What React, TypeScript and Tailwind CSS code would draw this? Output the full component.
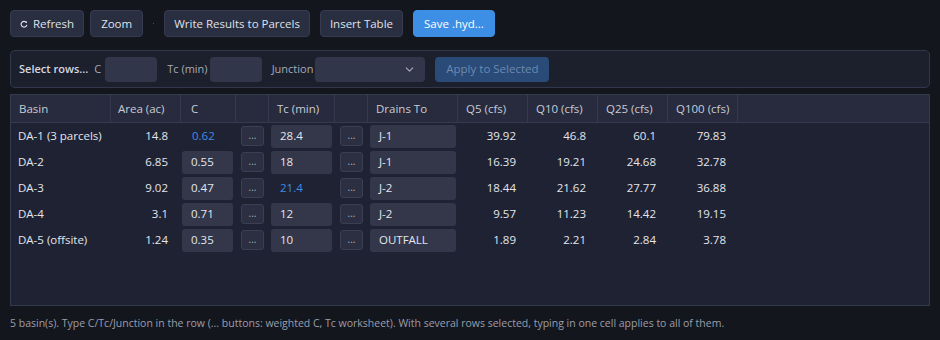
import { ChevronDown } from "lucide-react";

type Row = {
  name: string;
  area: string;
  c: string;
  cCalc?: boolean;
  tc: string;
  tcCalc?: boolean;
  to: string;
  q: string[];
};

const rows: Row[] = [
  { name: "DA-1 (3 parcels)", area: "14.8", c: "0.62", cCalc: true, tc: "28.4", to: "J-1", q: ["39.92", "46.8", "60.1", "79.83"] },
  { name: "DA-2", area: "6.85", c: "0.55", tc: "18", to: "J-1", q: ["16.39", "19.21", "24.68", "32.78"] },
  { name: "DA-3", area: "9.02", c: "0.47", tc: "21.4", tcCalc: true, to: "J-2", q: ["18.44", "21.62", "27.77", "36.88"] },
  { name: "DA-4", area: "3.1", c: "0.71", tc: "12", to: "J-2", q: ["9.57", "11.23", "14.42", "19.15"] },
  { name: "DA-5 (offsite)", area: "1.24", c: "0.35", tc: "10", to: "OUTFALL", q: ["1.89", "2.21", "2.84", "3.78"] },
];

const cols = "grid grid-cols-[100px_70px_55px_33px_66px_33px_90px_70px_70px_70px_70px_1fr]";

function Btn({ children, primary }: { children: React.ReactNode; primary?: boolean }) {
  return (
    <button
      className={
        primary
          ? "flex h-[27px] items-center rounded-[4px] border border-[#3d8fe6] bg-[#3d8fe6] px-[10px] text-white"
          : "flex h-[27px] items-center rounded-[4px] border border-[#363b51] bg-[#2a2e41] px-[9px] text-[#dfe2ea]"
      }
    >
      {children}
    </button>
  );
}

function Dots() {
  return (
    <button className="flex h-[20px] w-[23px] items-center justify-center rounded-[3px] border border-[#3a3f54] bg-[#2b2f41] pb-[3px] text-[10px] leading-none text-[#a9aebb]">
      ...
    </button>
  );
}

function Cell({ value, w }: { value: string; w: string }) {
  return (
    <div className={`flex h-[23px] items-center rounded-[3px] bg-[#333749] pl-[9px] text-[#e3e6ee] ${w}`}>{value}</div>
  );
}

export default function App() {
  return (
    <div
      className="h-[340px] w-[940px] overflow-hidden bg-[#14161e] px-[10px] pt-[10px] text-[11.5px] text-[#dfe2ea]"
      style={{ fontFamily: '"Open Sans", "Noto Sans", sans-serif' }}
    >
      <div className="flex items-center">
        <Btn>
          <svg width="8" height="8" viewBox="0 0 10 10" className="mr-[5px]">
            <path d="M8 3.2A3.6 3.6 0 1 0 8.6 6" fill="none" stroke="#dfe2ea" strokeWidth="1.4" />
            <path d="M6.3 2.6L8.8 1.5L8.6 4.2Z" fill="#dfe2ea" />
          </svg>
          Refresh
        </Btn>
        <div className="ml-[6px]">
          <div className="[&>button]:px-[10px]">
            <Btn>Zoom</Btn>
          </div>
        </div>
        <div className="ml-[10px] h-[1px] w-[1px] bg-[#4a4f63]" />
        <div className="ml-[10px]">
          <Btn>Write Results to Parcels</Btn>
        </div>
        <div className="ml-[10px]">
          <Btn>Insert Table</Btn>
        </div>
        <div className="ml-[10px]">
          <Btn primary>Save .hyd...</Btn>
        </div>
      </div>

      <div className="mt-[13px] flex h-[38px] items-center rounded-[5px] border border-[#33374b] bg-[#1c1f2c] pl-[8px] text-[11px] text-[#a7abb8]">
        <span className="font-semibold text-[#d6d9e2]">Select rows...</span>
        <span className="ml-[6px]">C</span>
        <div className="ml-[4px] h-[25px] w-[52px] rounded-[4px] bg-[#32364a]" />
        <span className="ml-[10px]">Tc (min)</span>
        <div className="ml-[2px] h-[25px] w-[52px] rounded-[4px] bg-[#32364a]" />
        <span className="ml-[10px]">Junction</span>
        <div className="ml-[2px] flex h-[25px] w-[110px] items-center justify-end rounded-[4px] bg-[#32364a] pr-[9px]">
          <ChevronDown size={13} strokeWidth={2} className="text-[#a7abb8]" />
        </div>
        <div className="ml-[10px] flex h-[25px] w-[114px] items-center justify-center rounded-[4px] bg-[#2a4a77] text-[11.5px] text-[#6e89b0]">
          Apply to Selected
        </div>
      </div>

      <div className="mt-[6px] h-[212px] border border-[#363a4f] bg-[#1f2232]">
        <div className={`${cols} h-[28px] border-b border-[#363a4f] bg-[#272b3d] text-[#c9ccd6]`}>
          <div className="flex items-center border-r border-[#363a4f] pl-[8px]">Basin</div>
          <div className="flex items-center border-r border-[#363a4f] pl-[7px]">Area (ac)</div>
          <div className="flex items-center border-r border-[#363a4f] pl-[10px]">C</div>
          <div className="border-r border-[#363a4f]" />
          <div className="flex items-center border-r border-[#363a4f] pl-[8px]">Tc (min)</div>
          <div className="border-r border-[#363a4f]" />
          <div className="flex items-center border-r border-[#363a4f] pl-[8px]">Drains To</div>
          <div className="flex items-center border-r border-[#363a4f] pl-[8px]">Q5 (cfs)</div>
          <div className="flex items-center border-r border-[#363a4f] pl-[8px]">Q10 (cfs)</div>
          <div className="flex items-center border-r border-[#363a4f] pl-[8px]">Q25 (cfs)</div>
          <div className="flex items-center border-r border-[#363a4f] pl-[8px]">Q100 (cfs)</div>
          <div />
        </div>
        {rows.map((r) => (
          <div key={r.name} className={`${cols} h-[26px] items-center text-[#e3e6ee]`}>
            <div className="pl-[7px]">{r.name}</div>
            <div className="pr-[13px] text-right">{r.area}</div>
            <div className="pl-[1px]">
              {r.cCalc ? <div className="pl-[10px] text-[#3b8ee6]">{r.c}</div> : <Cell value={r.c} w="w-[51px]" />}
            </div>
            <div className="flex justify-center">
              <Dots />
            </div>
            <div className="pl-[2px]">
              {r.tcCalc ? <div className="pl-[9px] text-[#3b8ee6]">{r.tc}</div> : <Cell value={r.tc} w="w-[61px]" />}
            </div>
            <div className="flex justify-center">
              <Dots />
            </div>
            <div className="pl-[2px]">
              <Cell value={r.to} w="w-[86px]" />
            </div>
            {r.q.map((q, i) => (
              <div key={i} className="pr-[12px] text-right">
                {q}
              </div>
            ))}
            <div />
          </div>
        ))}
      </div>

      <p className="mt-[10px] text-[10.5px] text-[#9a9eab]">
        5 basin(s). Type C/Tc/Junction in the row (... buttons: weighted C, Tc worksheet). With several rows selected, typing in one cell applies to all of them.
      </p>
    </div>
  );
}
